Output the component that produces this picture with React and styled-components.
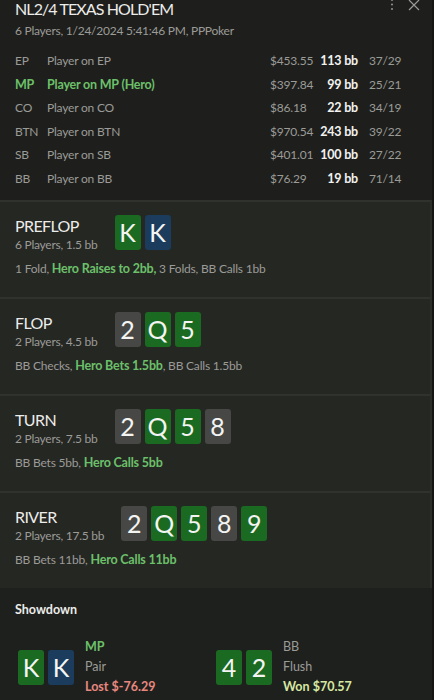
import React from 'react';
import styled, { createGlobalStyle } from 'styled-components';

const GlobalStyle = createGlobalStyle`
  html, body {
    margin: 0;
    padding: 0;
    background: #1e1f1c;
    overflow: hidden;
  }
  body {
    font-family: Lato, 'Noto Sans', sans-serif;
    color: #9b9b98;
  }
`;

const players = [
  { pos: 'EP', name: 'Player on EP', cash: '$453.55', bb: '113 bb', stats: '37/29' },
  { pos: 'MP', name: 'Player on MP (Hero)', cash: '$397.84', bb: '99 bb', stats: '25/21', hero: true },
  { pos: 'CO', name: 'Player on CO', cash: '$86.18', bb: '22 bb', stats: '34/19' },
  { pos: 'BTN', name: 'Player on BTN', cash: '$970.54', bb: '243 bb', stats: '39/22' },
  { pos: 'SB', name: 'Player on SB', cash: '$401.01', bb: '100 bb', stats: '27/22' },
  { pos: 'BB', name: 'Player on BB', cash: '$76.29', bb: '19 bb', stats: '71/14' },
];

const streets = [
  {
    name: 'PREFLOP',
    info: '6 Players, 1.5 bb',
    cards: [['K', 'green'], ['K', 'blue']],
    actions: [['1 Fold, '], ['Hero Raises to 2bb,', true], [' 3 Folds, BB Calls 1bb']],
  },
  {
    name: 'FLOP',
    info: '2 Players, 4.5 bb',
    cards: [['2', 'gray'], ['Q', 'green'], ['5', 'green']],
    actions: [['BB Checks, '], ['Hero Bets 1.5bb', true], [', BB Calls 1.5bb']],
  },
  {
    name: 'TURN',
    info: '2 Players, 7.5 bb',
    cards: [['2', 'gray'], ['Q', 'green'], ['5', 'green'], ['8', 'gray']],
    actions: [['BB Bets 5bb, '], ['Hero Calls 5bb', true]],
  },
  {
    name: 'RIVER',
    info: '2 Players, 17.5 bb',
    cards: [['2', 'gray'], ['Q', 'green'], ['5', 'green'], ['8', 'gray'], ['9', 'green']],
    actions: [['BB Bets 11bb, '], ['Hero Calls 11bb', true]],
  },
];

const suitColors = {
  green: '#1b6a21',
  blue: '#1b3c5c',
  gray: '#474846',
};

const App = () => (
  <>
    <GlobalStyle />
    <Window>
      <Header>
        <TitleRow>
          <Title>NL2/4 TEXAS HOLD'EM</Title>
          <Tools>
            <svg width="4" height="14" viewBox="0 0 4 14">
              <circle cx="2" cy="2" r="1.1" fill="#8a8a88" />
              <circle cx="2" cy="6.5" r="1.1" fill="#8a8a88" />
              <circle cx="2" cy="11" r="1.1" fill="#8a8a88" />
            </svg>
            <svg width="12" height="12" viewBox="0 0 12 12">
              <path d="M1 1 L11 11 M11 1 L1 11" stroke="#9a9a98" strokeWidth="1.2" fill="none" />
            </svg>
          </Tools>
        </TitleRow>
        <Sub>6 Players, 1/24/2024 5:41:46 PM, PPPoker</Sub>
        <PlayerTable>
          {players.map((p) => (
            <React.Fragment key={p.pos}>
              <Cell $hero={p.hero}>{p.pos}</Cell>
              <Cell $hero={p.hero}>{p.name}</Cell>
              <Cell>{p.cash}</Cell>
              <BbCell>{p.bb}</BbCell>
              <StatCell>{p.stats}</StatCell>
            </React.Fragment>
          ))}
        </PlayerTable>
      </Header>

      {streets.map((s) => (
        <Street key={s.name}>
          <StreetHead>
            <StreetInfo>
              <StreetName>{s.name}</StreetName>
              <StreetSub>{s.info}</StreetSub>
            </StreetInfo>
            <Cards>
              {s.cards.map(([r, c], k) => (
                <Card key={k} $color={c}>{r}</Card>
              ))}
            </Cards>
          </StreetHead>
          <Actions>
            {s.actions.map(([t, hero], k) =>
              hero ? <Hero key={k}>{t}</Hero> : <span key={k}>{t}</span>
            )}
          </Actions>
        </Street>
      ))}

      <Showdown>
        <ShowTitle>Showdown</ShowTitle>
        <Hands>
          <Hand>
            <Cards>
              <Card $color="green">K</Card>
              <Card $color="blue">K</Card>
            </Cards>
            <HandInfo>
              <HandLine $tone="hero">MP</HandLine>
              <HandLine>Pair</HandLine>
              <HandLine $tone="lost">Lost $-76.29</HandLine>
            </HandInfo>
          </Hand>
          <Hand>
            <Cards>
              <Card $color="green">4</Card>
              <Card $color="green">2</Card>
            </Cards>
            <HandInfo>
              <HandLine>BB</HandLine>
              <HandLine>Flush</HandLine>
              <HandLine $tone="won">Won $70.57</HandLine>
            </HandInfo>
          </Hand>
        </Hands>
      </Showdown>
    </Window>
  </>
);

export default App;

const Window = styled.div`
  width: 432px;
  height: 700px;
  border-right: 2px solid #151614;
  background: #1e1f1c;
  overflow: hidden;
`;

const Header = styled.div`
  padding: 0 15px;
  margin-top: -4px;
  height: 204px;
  box-sizing: border-box;
`;

const TitleRow = styled.div`
  display: flex;
  align-items: center;
  justify-content: space-between;
  height: 24px;
`;

const Title = styled.div`
  font-size: 16px;
  letter-spacing: -0.9px;
  color: #ececea;
`;

const Tools = styled.div`
  display: flex;
  align-items: center;
  gap: 14px;
  margin-right: -3px;
  margin-top: -6px;
`;

const Sub = styled.div`
  font-size: 12px;
  letter-spacing: -0.25px;
  line-height: 18px;
  margin-top: 2px;
`;

const PlayerTable = styled.div`
  display: grid;
  grid-template-columns: 32px 223px 50px 38px 50px;
  grid-auto-rows: 23.5px;
  align-items: center;
  margin-top: 9px;
  font-size: 12px;
  letter-spacing: -0.2px;
`;

const Cell = styled.div`
  color: ${(p) => (p.$hero ? '#6cc06a' : '#9b9b98')};
  font-weight: ${(p) => (p.$hero ? 700 : 400)};
  font-size: ${(p) => (p.$hero ? '12.5px' : '12px')};
  white-space: nowrap;
`;

const BbCell = styled.div`
  color: #f2f2f0;
  font-weight: 700;
  font-size: 12.5px;
  text-align: right;
  white-space: nowrap;
`;

const StatCell = styled.div`
  padding-left: 11px;
`;

const Street = styled.div`
  background: #252723;
  border-top: 2px solid #30322e;
  border-right: 2px solid #2c2e2a;
  padding: 13px 15px 0 15px;
  height: 97px;
  box-sizing: border-box;
`;

const StreetHead = styled.div`
  display: flex;
  align-items: flex-start;
  gap: 17px;
`;

const StreetInfo = styled.div`
  padding-top: 1px;
`;

const StreetName = styled.div`
  font-size: 16px;
  letter-spacing: -0.6px;
  line-height: 20px;
  color: #ececea;
`;

const StreetSub = styled.div`
  font-size: 12px;
  letter-spacing: -0.25px;
  line-height: 18px;
`;

const Cards = styled.div`
  display: flex;
  gap: 4px;
`;

const Card = styled.div`
  width: 26px;
  height: 35px;
  border-radius: 3px;
  background: ${(p) => suitColors[p.$color]};
  color: #f4f4f2;
  font-size: 25px;
  font-weight: 400;
  line-height: 35px;
  text-align: center;
`;

const Actions = styled.div`
  margin-top: 6px;
  font-size: 12px;
  letter-spacing: -0.2px;
  line-height: 18px;
  white-space: nowrap;
`;

const Hero = styled.span`
  color: #6cc06a;
  font-weight: 700;
  font-size: 12.5px;
`;

const Showdown = styled.div`
  background: #1e201d;
  padding: 13px 18px 0 15px;
  height: 120px;
`;

const ShowTitle = styled.div`
  font-size: 12.5px;
  font-weight: 700;
  color: #ececea;
  line-height: 18px;
`;

const Hands = styled.div`
  display: grid;
  grid-template-columns: 198px 1fr;
  margin-top: 18px;
  padding-left: 3px;
`;

const Hand = styled.div`
  display: flex;
  align-items: center;
  gap: 11px;
`;

const HandInfo = styled.div`
  display: flex;
  flex-direction: column;
`;

const HandLine = styled.div`
  font-size: 12.5px;
  line-height: 20px;
  white-space: nowrap;
  color: ${(p) =>
    p.$tone === 'hero' ? '#6cc06a' : p.$tone === 'lost' ? '#e8877f' : p.$tone === 'won' ? '#d7e8a2' : '#9b9b98'};
  font-weight: ${(p) => (p.$tone ? 700 : 400)};
`;
